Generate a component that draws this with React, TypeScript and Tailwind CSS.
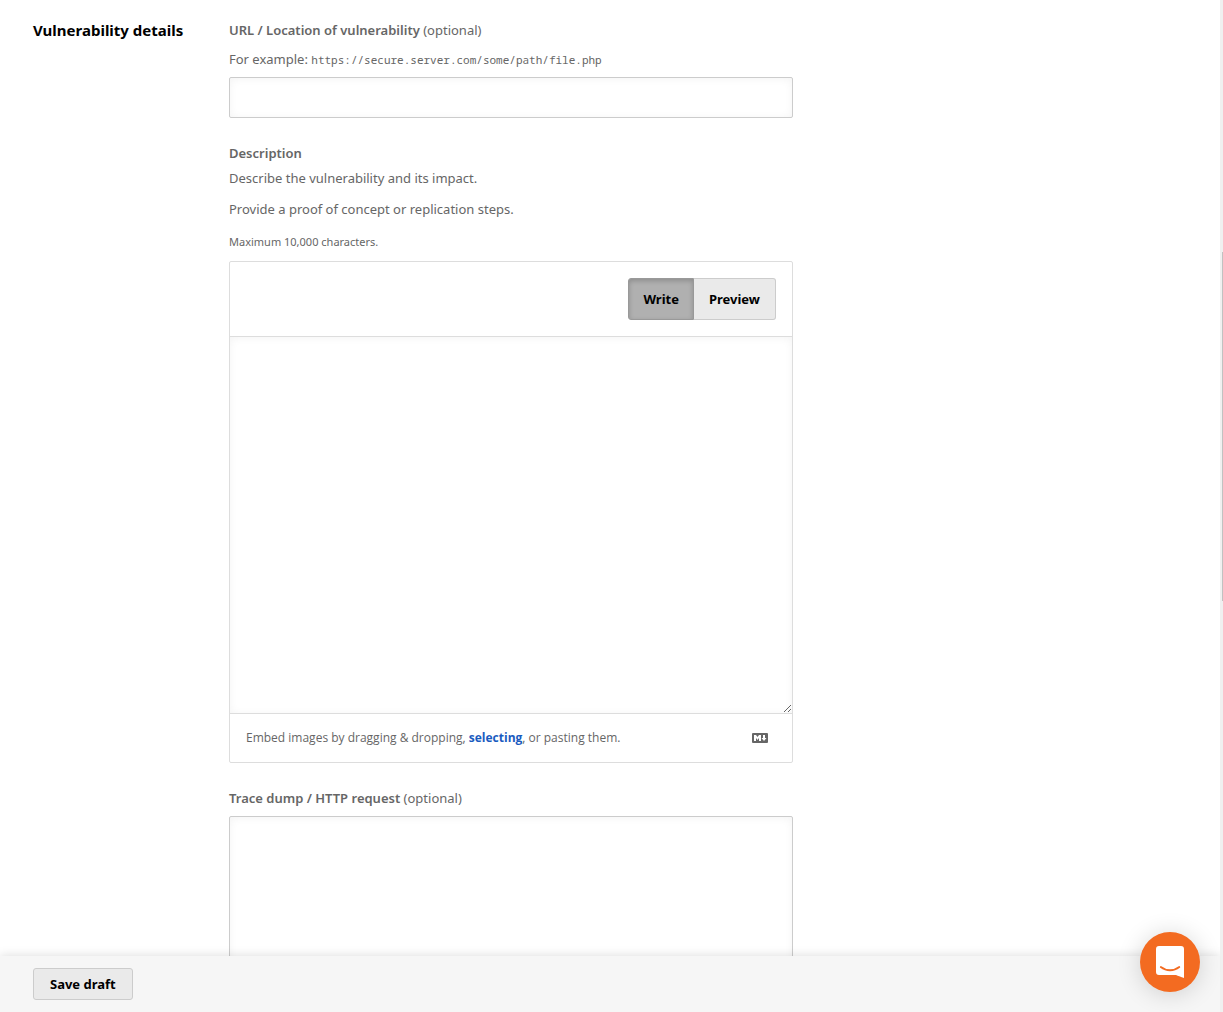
import { useState } from 'react';

type EditorMode = 'write' | 'preview';

function MarkdownIcon() {
  return (
    <svg width="16" height="10" viewBox="0 0 16 10" aria-hidden="true">
      <rect width="16" height="10" rx="1" fill="#666" />
      <path d="M2 8V2h2l1.500 2L7 2h2v6H7V5L5.500 7 4 5v3z" fill="#fff" />
      <path d="M11 2h2v3h1.500L12 8 9.500 5H11z" fill="#fff" />
    </svg>
  );
}

function ChatIcon() {
  return (
    <svg width="28" height="32" viewBox="0 0 28 32" aria-hidden="true">
      <path d="M3 0h22A3 3 0 0 1 28 3V32s-3.200-.9-8-3H3A3 3 0 0 1 0 26v-23A3 3 0 0 1 3 0z" fill="#fff" />
      <path d="M4.800 21c5.500 4.300 13 4.300 18.500 0" fill="none" stroke="#f36b21" strokeWidth="1.800" strokeLinecap="round" />
    </svg>
  );
}

const textAreaShadow = 'shadow-[inset_0_1px_8px_rgba(0,0,0,0.05)]';

export default function App() {
  const [mode, setMode] = useState<EditorMode>('write');
  const [description, setDescription] = useState('');

  return (
    <div className="flex h-screen bg-white font-['Noto_Sans',sans-serif] text-[13px] leading-5 text-[#666]">
      <div className="flex min-w-0 flex-1 flex-col overflow-hidden">
        <main className="flex min-h-0 flex-1 overflow-hidden px-[33px] pt-5">
          <h2 className="w-[196px] shrink-0 text-[15px] font-bold text-black">Vulnerability details</h2>

          <form className="max-w-[564px] flex-1" onSubmit={(e) => e.preventDefault()}>
            {/* URL */}
            <div className="mb-[25px]">
              <label htmlFor="url" className="block">
                <span className="font-semibold">URL / Location of vulnerability</span> (optional)
              </label>
              <p className="mt-[9px] mb-[7px]">
                For example: <code className="font-['Noto_Sans_Mono','DejaVu_Sans_Mono',monospace] text-[11px]">https://secure.server.com/some/path/file.php</code>
              </p>
              <input
                id="url"
                type="text"
                className={`block h-[41px] w-full rounded-[2px] border border-[#ccc] px-3 outline-none ${textAreaShadow}`}
              />
            </div>

            {/* Description */}
            <div className="mb-[25px]">
              <label htmlFor="description" className="block font-semibold">Description</label>
              <p className="mt-[5px]">Describe the vulnerability and its impact.</p>
              <p className="mt-[11px]">Provide a proof of concept or replication steps.</p>
              <p className="mt-[13px] text-[11px]">Maximum 10,000 characters.</p>

              <div className="mt-[9px] rounded-[2px] border border-[#ddd]">
                <div className="flex justify-end border-b border-[#ddd] p-4 text-[13px] font-bold text-black">
                  <button
                    type="button"
                    onClick={() => setMode('write')}
                    className={`h-[42px] rounded-l-[3px] border px-[14px] ${
                      mode === 'write'
                        ? 'border-[#999] bg-[#b0b0b0] shadow-[inset_0_2px_5px_rgba(0,0,0,0.2)]'
                        : 'border-[#ccc] bg-[#eaeaea]'
                    }`}
                  >
                    Write
                  </button>
                  <button
                    type="button"
                    onClick={() => setMode('preview')}
                    className={`h-[42px] rounded-r-[3px] border border-l-0 px-[15px] ${
                      mode === 'preview'
                        ? 'border-[#999] bg-[#b0b0b0] shadow-[inset_0_2px_5px_rgba(0,0,0,0.2)]'
                        : 'border-[#ccc] bg-[#eaeaea]'
                    }`}
                  >
                    Preview
                  </button>
                </div>
                {mode === 'write' ? (
                  <textarea
                    id="description"
                    value={description}
                    onChange={(e) => setDescription(e.target.value)}
                    className={`block h-[376px] w-full resize-y p-3 outline-none ${textAreaShadow}`}
                  />
                ) : (
                  <div className="h-[376px] p-3 whitespace-pre-wrap">{description}</div>
                )}
                <div className="flex h-[49px] items-center justify-between border-t border-[#ddd] pr-6 pl-4 font-['Open_Sans',sans-serif] text-xs leading-5">
                  <p>
                    Embed images by dragging &amp; dropping,{' '}
                    <a href="#select" className="font-bold text-[#1a5bc0]">selecting</a>, or pasting them.
                  </p>
                  <a href="#markdown" aria-label="Markdown supported">
                    <MarkdownIcon />
                  </a>
                </div>
              </div>
            </div>

            {/* Trace dump */}
            <div>
              <label htmlFor="trace" className="block">
                <span className="font-semibold">Trace dump / HTTP request</span> (optional)
              </label>
              <textarea
                id="trace"
                className={`mt-2 block h-[260px] w-full rounded-[2px] border border-[#ccc] p-3 outline-none ${textAreaShadow}`}
              />
            </div>
          </form>
        </main>

        <footer className="relative bg-[#f6f6f6] px-[33px] py-3 shadow-[0_0_10px_rgba(0,0,0,0.15)]">
          <button type="button" className="block h-8 rounded-[3px] border border-[#ccc] bg-[#eaeaea] px-4 font-bold text-black">
            Save draft
          </button>
        </footer>
      </div>

      {/* Scroll track */}
      <div className="flex w-[3px] flex-col items-end bg-[#f0f0f0] pt-[252px]">
        <div className="h-[349px] w-px bg-[#c1c1c1]" />
      </div>

      <button
        type="button"
        aria-label="Open chat"
        className="fixed right-[23px] bottom-5 flex size-[60px] items-center justify-center rounded-full bg-[#f36b21] shadow-[0_2px_24px_rgba(0,0,0,0.16)]"
      >
        <ChatIcon />
      </button>
    </div>
  );
}
